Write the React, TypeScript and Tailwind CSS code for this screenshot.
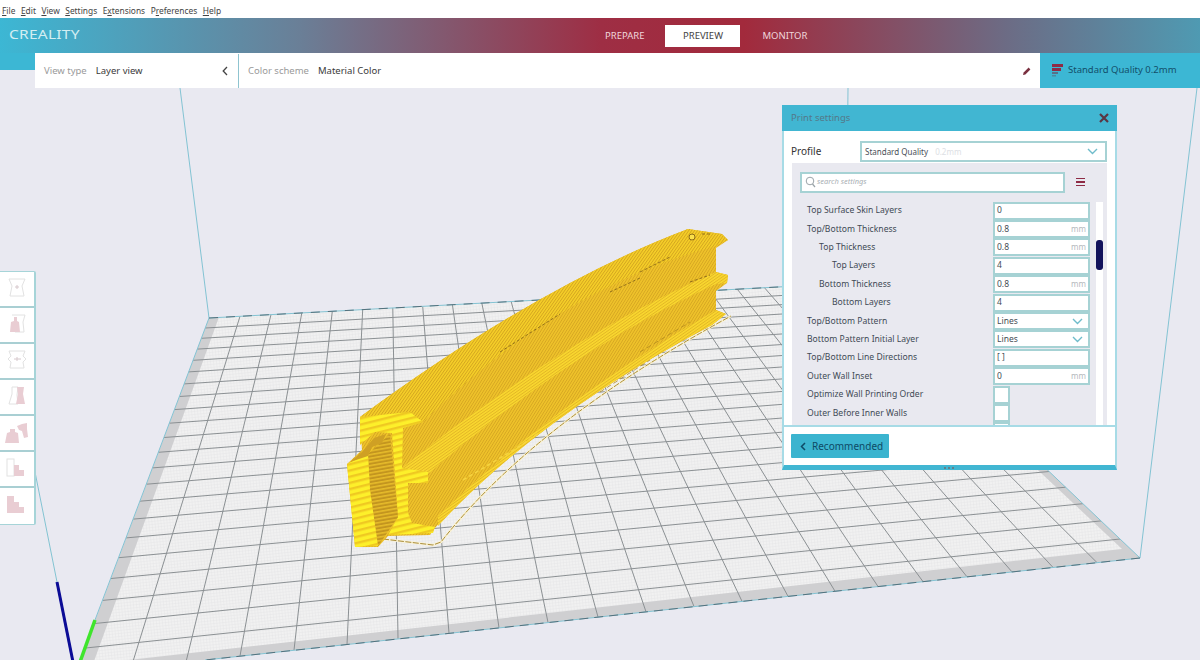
import React from "react";

const font = { fontFamily: '"Noto Sans", "Open Sans", sans-serif' };

const frontX = [75, 131, 186, 240, 294, 347, 398, 449, 499, 548, 598, 646, 694, 742, 788, 835, 878, 923, 967, 1012, 1053, 1097, 1140];
const frontY = (x: number) => 674 - 0.109 * (x - 75);
const backEdgeY = (x: number) => 318 - 0.055 * (x - 209);
const backX = (i: number) => (i === 0 ? 209 : 240 + (i - 1) * 31 - 0.11 * (i - 1) * (i - 2));
const proj = (t: number, k: number) => (t * (1 + k)) / (1 + k * t);

function majorGrid() {
  let s = "";
  for (let i = 1; i < 22; i++) {
    const fx = frontX[i];
    const bx = backX(i);
    s += `M${fx.toFixed(1)} ${frontY(fx).toFixed(1)}L${bx.toFixed(1)} ${backEdgeY(bx).toFixed(1)}`;
  }
  for (let j = 1; j < 22; j++) {
    const t = j / 22;
    const ly = 674 - 356 * proj(t, 0.65);
    const lx = 75 + ((674 - ly) / 356) * 134;
    const ry = 558 - 275 * proj(t, 0.56);
    const rx = 1140 - ((558 - ry) / 275) * 289;
    s += `M${lx.toFixed(1)} ${ly.toFixed(1)}L${rx.toFixed(1)} ${ry.toFixed(1)}`;
  }
  return s;
}

function Scene() {
  return (
    <svg className="absolute left-0 top-0" width={1200} height={660} viewBox="0 0 1200 660">
      <defs>
        <pattern id="plateDots" width="3" height="3" patternUnits="userSpaceOnUse" patternTransform="rotate(-6)">
          <rect width="3" height="3" fill="#f1f1f1" />
          <rect width="3" height="0.4" fill="#e4e4e6" />
          <rect width="0.4" height="3" fill="#e4e4e6" />
        </pattern>
        <pattern id="hatchSide" width="2.4" height="2.4" patternUnits="userSpaceOnUse" patternTransform="rotate(-58)">
          <rect width="2.4" height="2.4" fill="#eec22a" />
          <rect width="2.4" height="0.8" fill="#d6a622" />
        </pattern>
        <pattern id="hatchTop" width="2.4" height="2.4" patternUnits="userSpaceOnUse" patternTransform="rotate(35)">
          <rect width="2.4" height="2.4" fill="#f6d028" />
          <rect width="0.9" height="2.4" fill="#d4a520" />
        </pattern>
        <pattern id="hatchFlange" width="2.4" height="2.4" patternUnits="userSpaceOnUse" patternTransform="rotate(-35)">
          <rect width="2.4" height="2.4" fill="#f8d62e" />
          <rect width="2.4" height="0.7" fill="#e0b224" />
        </pattern>
        <pattern id="front" width="12" height="6" patternUnits="userSpaceOnUse" patternTransform="rotate(-14)">
          <rect width="12" height="6" fill="#fdf02a" />
          <rect width="12" height="2.4" fill="#efc922" />
        </pattern>
        <pattern id="frontDark" width="8" height="3.6" patternUnits="userSpaceOnUse" patternTransform="rotate(-10)">
          <rect width="8" height="3.6" fill="#c3951f" />
          <rect width="8" height="1.6" fill="#e6bb2a" />
        </pattern>
      </defs>

      <polygon points="209,318 851,283 1140,558 75,674" fill="#cfcfd1" />
      <polygon points="219,317 840,284 1122,549 93,664" fill="url(#plateDots)" />
      <path d={majorGrid()} stroke="#8b9093" strokeWidth="1" fill="none" />

      <g stroke="#83c3d3" strokeWidth="1" fill="none">
        <polyline points="209,318 180,88" />
        <polyline points="846,283 848,88" />
        <polyline points="1140,558 1197,88" />
        <polyline points="35,472 57,582" />
        <polyline points="209,318 851,283 1140,558" />
        <polyline points="209,318 95,620" />
        <polyline points="1140,558 205,660" />
      </g>
      <polyline points="1140,558 205,660" stroke="#55717c" strokeWidth="1" strokeDasharray="9 6" fill="none" />
      <polyline points="209,318 851,283" stroke="#55717c" strokeWidth="1" strokeDasharray="9 8" fill="none" />
      <line x1="57" y1="582" x2="73" y2="662" stroke="#0c0c96" strokeWidth="3" />
      <line x1="95" y1="620" x2="80" y2="662" stroke="#3fe52c" strokeWidth="3.5" />

      {/* skirt */}
      <path d="M383 539 L433 545 L441 542 Q534 423 731 316" fill="none" stroke="#fbf3d4" strokeWidth="2.5" />
      <path d="M383 539 L433 545 L441 542 Q534 423 731 316" fill="none" stroke="#a98d3c" strokeWidth="1" strokeDasharray="6 1.5" />

      {/* beam silhouette */}
      <path
        d="M360 417 Q540 285 688 229 L722 234 L728 240 L716 248 L716 272 L728 275 L727 283 L716 291 L716 310 L726 314 L712 325 Q540 415 433 530 L430 535 L388 536 L378 547 L355 547 L347 464 L362 450 Z"
        fill="url(#hatchSide)"
      />
      <path
        d="M360 417 Q540 285 688 229 L722 234 L728 240 L713 247 Q560 288 423 422 L410 412 Z"
        fill="url(#hatchTop)"
      />
      <path
        d="M402 468 Q560 340 716 272 L728 275 L727 283 L716 284 Q570 350 428 474 L428 472 Z"
        fill="url(#hatchFlange)"
      />
      <path
        d="M438 516 Q556 402 716 310 L726 314 L712 325 Q540 415 438 526 Z"
        fill="url(#hatchFlange)"
      />
      <circle cx="692" cy="237" r="3" fill="#fbe04a" stroke="#8d6c18" strokeWidth="1" />
      <path d="M702 234 H710 M640 272 L670 257 M690 282 L710 275 M610 292 L640 278 M500 352 L560 314" stroke="#93701a" strokeWidth="1" strokeDasharray="3 2" fill="none" />
      <path d="M600 392 L650 360 M640 352 L690 322" stroke="#b38a1e" strokeWidth="0.8" strokeDasharray="5 3" fill="none" />
      <polyline points="463,480 480,470 500,458 520,446 540,432" stroke="#f6d440" strokeWidth="1.5" fill="none" strokeDasharray="4 3" />

      {/* end profile */}
      <polygon
        points="360,417 410,412 423,422 403,428 402,468 428,472 428,483 408,483 408,513 412,523 435,527 433,533 388,535 398,517 392,433 375,432 360,445"
        fill="url(#front)"
      />
      <polygon points="368,454 390,434 398,517 378,546 370,490" fill="url(#frontDark)" />
      <polygon points="347,464 368,454 370,490 378,546 355,547" fill="url(#front)" />
      <polygon points="362,452 374,438 386,434 382,443 372,447 368,456 350,462" fill="#cfa024" />
    </svg>
  );
}

const iconOutline = "#e2e2e2";
const iconFill = "#e9cdd3";
const ToolIcons = [
  <g key="1" fill="none" stroke={iconOutline} strokeWidth="1">
    <path d="M5 2 H21 L18 9 L20 19 H6 L8 9 Z" />
    <path d="M11 10 H15 M13 8 V12" stroke="#d6c8cc" />
  </g>,
  <g key="2">
    <path d="M8 2 H21 L19 9 L20 19 H11" fill="none" stroke={iconOutline} />
    <path d="M6 19 L7 9 L10 8 L10 4 L13 4 L13 8 L15 9 L16 19 Z" fill={iconFill} />
  </g>,
  <g key="3" fill="none" stroke={iconOutline}>
    <path d="M5 2 H21 L19 7 L22 10 L19 13 L20 19 H6 L7 13 L4 10 L7 7 Z" />
    <path d="M10 10 H17 M13 8 V12" stroke="#d6c8cc" />
  </g>,
  <g key="4">
    <path d="M8 2 H14 L13 10 L14 19 H5 L8 9 Z" fill="none" stroke={iconOutline} />
    <path d="M12 19 L14 9 L13 2 H20 L19 9 L21 19 Z" fill={iconFill} />
  </g>,
  <g key="5" fill={iconFill}>
    <path d="M1 22 L3 12 L6 11 L6 8 L11 8 L11 11 L14 12 L15 22 Z" />
    <path d="M13 5 L18 3 L23 2 L23 8 L24 16 L20 17 L18 10 L15 9 Z" />
  </g>,
  <g key="6">
    <rect x="3" y="2" width="7" height="17" fill="none" stroke={iconOutline} />
    <path d="M10 8 H15 V13 H20 V19 H10 Z" fill={iconFill} />
  </g>,
  <g key="7">
    <path d="M3 2 H10 V8 H15 V13 H20 V19 H3 Z" fill={iconFill} />
  </g>,
];

function Toolbar() {
  return (
    <div className="absolute left-0 top-[271px] w-[36px] flex flex-col bg-white border-y border-r-2 border-[#a6d4d8] rounded-r-[2px]">
      {ToolIcons.map((ic, i) => (
        <div
          key={i}
          className={`h-[36px] flex items-center justify-center ${i < 6 ? "border-b-2 border-[#a9cfd3]" : ""}`}
        >
          <svg width="26" height="24" viewBox="0 0 26 24">{ic}</svg>
        </div>
      ))}
    </div>
  );
}

function Chevron({ className = "" }: { className?: string }) {
  return (
    <svg className={className} width="11" height="7" viewBox="0 0 11 7" fill="none">
      <path d="M1 1 L5.5 5.5 L10 1" stroke="#6fbccb" strokeWidth="1.4" />
    </svg>
  );
}

type Row = { label: string; indent: number; value?: string; unit?: string; kind: "text" | "select" | "check" };
const rows: Row[] = [
  { label: "Top Surface Skin Layers", indent: 0, value: "0", kind: "text" },
  { label: "Top/Bottom Thickness", indent: 0, value: "0.8", unit: "mm", kind: "text" },
  { label: "Top Thickness", indent: 1, value: "0.8", unit: "mm", kind: "text" },
  { label: "Top Layers", indent: 2, value: "4", kind: "text" },
  { label: "Bottom Thickness", indent: 1, value: "0.8", unit: "mm", kind: "text" },
  { label: "Bottom Layers", indent: 2, value: "4", kind: "text" },
  { label: "Top/Bottom Pattern", indent: 0, value: "Lines", kind: "select" },
  { label: "Bottom Pattern Initial Layer", indent: 0, value: "Lines", kind: "select" },
  { label: "Top/Bottom Line Directions", indent: 0, value: "[ ]", kind: "text" },
  { label: "Outer Wall Inset", indent: 0, value: "0", unit: "mm", kind: "text" },
  { label: "Optimize Wall Printing Order", indent: 0, kind: "check" },
  { label: "Outer Before Inner Walls", indent: 0, kind: "check" },
  { label: "", indent: 0, kind: "check" },
];

function SettingRow({ r }: { r: Row }) {
  const pad = r.indent === 0 ? "pl-[15px]" : r.indent === 1 ? "pl-[27px]" : "pl-[40px]";
  return (
    <div className="h-[18.4px] flex items-center shrink-0">
      <div className={`w-[201px] text-[8.6px] text-[#3f4a55] whitespace-nowrap ${pad}`}>{r.label}</div>
      {r.kind === "check" ? (
        <div className="w-[17px] h-[18px] bg-white border-2 border-[#a6d2d4]" />
      ) : (
        <div className="w-[97px] h-[18px] bg-white border-2 border-[#a6d2d4] flex items-center justify-between pl-[2px] pr-[2px] text-[8.5px] text-[#444c55]">
          <span>{r.value}</span>
          {r.unit && <span className="text-[#b4b8bc] text-[8px]">{r.unit}</span>}
          {r.kind === "select" && <Chevron className="mr-[3px]" />}
        </div>
      )}
    </div>
  );
}

function PrintSettings() {
  return (
    <div className="absolute left-[782px] top-[105px] w-[335px] h-[365px] flex flex-col bg-white border-x-2 border-[#a7dbe6] border-b-[5px] border-b-[#41b6d2]">
      <div className="h-[26px] -mx-[2px] bg-[#41b6d2] flex items-center justify-between pl-[9px] pr-[8px] shrink-0">
        <span className="text-[9.5px] text-[#54798a]">Print settings</span>
        <svg width="10" height="10" viewBox="0 0 10 10">
          <path d="M1 1 L9 9 M9 1 L1 9" stroke="#5a3644" strokeWidth="2.2" />
        </svg>
      </div>
      <div className="h-[32px] flex items-start pt-[10px] pl-[7px] pr-[8px] shrink-0">
        <span className="w-[69px] h-[21px] leading-[21px] text-[10px] text-[#333]">Profile</span>
        <div className="flex-1 h-[21px] border-2 border-[#a6d2d4] flex items-center justify-between pl-[3px] pr-[7px]">
          <span className="text-[8px] text-[#4a5058]">
            Standard Quality <span className="ml-[5px] text-[#dde0e4]">0.2mm</span>
          </span>
          <Chevron />
        </div>
      </div>
      <div className="ml-[8px] mr-[8px] bg-[#e9e9f0] flex-1 flex flex-col overflow-hidden relative">
        <div className="h-[38px] flex items-center pl-[8px] shrink-0">
          <div className="w-[265px] h-[21px] bg-white border-2 border-[#a6d2d4] flex items-center pl-[3px] gap-[1px]">
            <svg width="11" height="12" viewBox="0 0 11 12" fill="none">
              <circle cx="5" cy="5" r="3.8" stroke="#9aa3a8" strokeWidth="1" />
              <path d="M7.5 8 L10 11" stroke="#9aa3a8" strokeWidth="1.2" />
            </svg>
            <span className="text-[7.5px] italic text-[#a9afb5]">search settings</span>
          </div>
          <div className="ml-[11px] w-[9px] flex flex-col gap-[2px]">
            <div className="h-[1.5px] bg-[#8e2b45]" />
            <div className="h-[1.5px] bg-[#8e2b45]" />
            <div className="h-[1.5px] bg-[#8e2b45]" />
          </div>
        </div>
        <div className="flex flex-col overflow-hidden h-[224px] pt-[0.5px]">
          {rows.map((r, i) => (
            <SettingRow key={i} r={r} />
          ))}
        </div>
        <div className="absolute left-[304px] top-[39px] bottom-0 w-[7px] bg-white">
          <div className="absolute left-0 top-[38px] w-[7px] h-[30px] rounded-[3px] bg-[#12125c]" />
        </div>
      </div>
      <div className="h-[40px] border-t-2 border-[#a7dbe6] -mx-[2px] flex items-start pl-[9px] pt-[7px] shrink-0 relative">
        <button className="w-[98px] h-[24px] bg-[#3bb4cf] flex items-center pl-[9px] gap-[6px] text-[10px] text-[#0e4a66] rounded-[1px]">
          <svg width="6" height="9" viewBox="0 0 6 9" fill="none">
            <path d="M5 1 L1.5 4.5 L5 8" stroke="#0e4a66" strokeWidth="1.5" />
          </svg>
          Recommended
        </button>
      </div>
      <div className="absolute left-[160px] -bottom-[4px] flex gap-[2px]">
        <div className="w-[2px] h-[2px] bg-[#62808a]" />
        <div className="w-[2px] h-[2px] bg-[#62808a]" />
        <div className="w-[2px] h-[2px] bg-[#62808a]" />
      </div>
    </div>
  );
}

export default function App() {
  return (
    <div className="relative w-[1200px] h-[660px] overflow-hidden bg-[#e9e9f1]" style={font}>
      <Scene />
      <Toolbar />
      <div className="relative flex flex-col">
        <div className="h-[18px] bg-white flex items-center gap-[5.5px] pl-[2px] text-[8.4px] text-[#444] pt-[4px]">
          <span><u>F</u>ile</span>
          <span><u>E</u>dit</span>
          <span><u>V</u>iew</span>
          <span><u>S</u>ettings</span>
          <span>E<u>x</u>tensions</span>
          <span>P<u>r</u>eferences</span>
          <span><u>H</u>elp</span>
        </div>
        <div className="h-[35px] flex items-center bg-[linear-gradient(90deg,#3cb7d4_0%,#6a7f97_25%,#9e2e44_50%,#a22a3c_62%,#6c6c85_84%,#4f9ab2_100%)]">
          <span className="ml-[9px] text-[12.5px] text-[#d4eef2] tracking-[0.2px] scale-x-[1.24] origin-left">CREALITY</span>
          <div className="absolute left-[605px] top-[25px] flex items-center text-[9.5px]">
            <span className="text-[#f0d5da]">PREPARE</span>
            <span className="ml-[21px] w-[75px] h-[22px] bg-white text-[#444] flex items-center justify-center">PREVIEW</span>
            <span className="ml-[22px] text-[#f0d5da]">MONITOR</span>
          </div>
        </div>
        <div className="h-[35px] flex relative">
          <div className="w-[35px] h-[17px] bg-[#3cb7d4]" />
          <div className="w-[1005px] h-[35px] bg-white flex items-center text-[9.5px] pt-[1px]">
            <div className="w-[204px] h-full flex items-center pl-[9px] border-r border-[#8fc4d0]">
              <span className="text-[#9a9a9a]">View type</span>
              <span className="ml-[9px] text-[#3a3a3a]">Layer view</span>
              <svg className="ml-[79px]" width="6" height="10" viewBox="0 0 6 10" fill="none">
                <path d="M5 1 L1.2 5 L5 9" stroke="#444" strokeWidth="1.3" />
              </svg>
            </div>
            <span className="ml-[9px] text-[#9a9a9a]">Color scheme</span>
            <span className="ml-[9px] text-[#3a3a3a]">Material Color</span>
            <svg className="ml-auto mr-[8px]" width="10" height="10" viewBox="0 0 10 10">
              <path d="M1 9 L1.6 6.6 L6.6 1.6 L8.4 3.4 L3.4 8.4 Z" fill="#7a3040" />
            </svg>
          </div>
          <div className="flex-1 bg-[#3cb7d4] flex items-center pl-[12px] gap-[5px]">
            <svg width="11" height="13" viewBox="0 0 11 13">
              <rect x="0" y="0" width="11" height="3" fill="#8e2b45" />
              <rect x="0" y="4" width="9" height="3" fill="#8e2b45" />
              <rect x="0" y="8" width="6" height="2" fill="#5a6f88" />
              <rect x="0" y="11" width="4" height="1.5" fill="#4b8aa0" />
            </svg>
            <span className="text-[9.5px] text-[#134f6a] whitespace-nowrap">Standard Quality 0.2mm</span>
          </div>
        </div>
      </div>
      <PrintSettings />
    </div>
  );
}
